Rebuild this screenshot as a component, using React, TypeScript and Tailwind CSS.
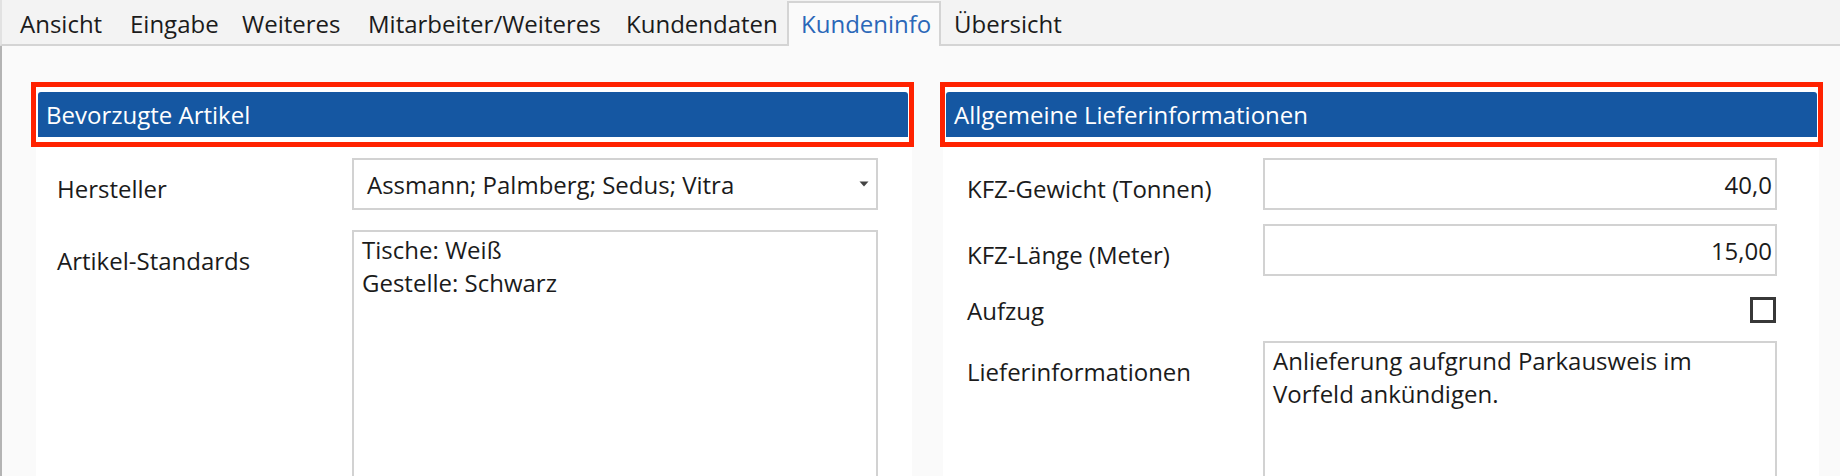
import React from 'react';

const tabs = [
  { label: 'Ansicht', cls: 'w-[110px]' },
  { label: 'Eingabe', cls: 'w-[112px]' },
  { label: 'Weiteres', cls: 'w-[126px]' },
  { label: 'Mitarbeiter/Weiteres', cls: 'w-[258px]' },
  { label: 'Kundendaten', cls: 'w-[175px]' },
];

const SectionHeader: React.FC<{ title: string; className: string }> = ({ title, className }) => (
  <div className={`border-[5px] border-[#ff2200] bg-white py-[5px] ${className}`}>
    <div className="flex h-[45px] items-center rounded-t-[3px] bg-[#1557a2] pl-[8px] leading-[33px] text-white">
      {title}
    </div>
  </div>
);

const App: React.FC = () => {
  return (
    <div className="flex h-[476px] w-[1840px] flex-col overflow-hidden bg-[#fafafa] font-['Open_Sans','Noto_Sans',sans-serif] text-[24px] text-[#1b1b1b]">
      {/* Reiter */}
      <div className="flex h-[46px] shrink-0 items-start border-b-2 border-l-2 border-b-[#d4d4d4] border-l-[#e2e2e2] bg-[#f3f3f3] pl-[4px]">
        {tabs.map((t) => (
          <div key={t.label} className={`h-[44px] pl-[14px] pt-[7px] leading-[33px] whitespace-nowrap ${t.cls}`}>
            {t.label}
          </div>
        ))}
        <div className="mt-[1px] h-[45px] w-[154px] border-2 border-b-0 border-[#d4d4d4] bg-[#fafafa] pl-[12px] pt-[4px] leading-[33px] text-[#2a67b8]">
          Kundeninfo
        </div>
        <div className="h-[44px] pl-[13px] pt-[7px] leading-[33px]">Übersicht</div>
      </div>

      {/* Inhalt */}
      <div className="flex min-h-0 flex-1 gap-[31px] border-l-2 border-[#b4b4b4] pl-[34px] pt-[36px]">
        {/* Bevorzugte Artikel */}
        <div className="w-[876px] bg-white">
          <SectionHeader title="Bevorzugte Artikel" className="ml-[-5px] mr-[-2px] pl-[2px] pr-[1px]" />

          <div className="mt-[11px] flex pl-[21px]">
            <div className="w-[295px] pt-[14px] leading-[33px]">Hersteller</div>
            <div className="flex h-[52px] w-[526px] items-center justify-between border-2 border-[#d2d2d2] pl-[13px] pr-[7px] leading-[33px]">
              <span>Assmann; Palmberg; Sedus; Vitra</span>
              <svg width="10" height="6" viewBox="0 0 10 6">
                <path d="M0.5 0.5 H9.5 L5 5.5 Z" fill="#444" />
              </svg>
            </div>
          </div>

          <div className="mt-[20px] flex pl-[21px]">
            <div className="w-[295px] pt-[14px] leading-[33px]">Artikel-Standards</div>
            <div className="h-[300px] w-[526px] border-2 border-[#d2d2d2] pl-[8px] pt-[1px] leading-[33px]">
              <div>Tische: Weiß</div>
              <div>Gestelle: Schwarz</div>
            </div>
          </div>
        </div>

        {/* Allgemeine Lieferinformationen */}
        <div className="w-[876px] bg-white">
          <SectionHeader title="Allgemeine Lieferinformationen" className="ml-[-3px] mr-[-4px] px-[1px]" />

          <div className="mt-[11px] flex pl-[24px]">
            <div className="w-[296px] pt-[14px] leading-[33px]">KFZ-Gewicht (Tonnen)</div>
            <div className="flex h-[52px] w-[514px] items-center justify-end border-2 border-[#d2d2d2] pr-[3px] leading-[33px]">
              40,0
            </div>
          </div>

          <div className="mt-[14px] flex pl-[24px]">
            <div className="w-[296px] pt-[14px] leading-[33px]">KFZ-Länge (Meter)</div>
            <div className="flex h-[52px] w-[514px] items-center justify-end border-2 border-[#d2d2d2] pr-[3px] leading-[33px]">
              15,00
            </div>
          </div>

          <div className="mt-[14px] flex h-[40px] items-center pl-[24px]">
            <div className="w-[296px] leading-[33px]">Aufzug</div>
            <div className="flex w-[514px] justify-end pr-[1px]">
              <div className="h-[26px] w-[26px] border-[3px] border-[#383838] bg-white" />
            </div>
          </div>

          <div className="mt-[11px] flex pl-[24px]">
            <div className="w-[296px] pt-[14px] leading-[33px]">Lieferinformationen</div>
            <div className="h-[300px] w-[514px] border-2 border-[#d2d2d2] pl-[8px] pt-[1px] leading-[33px]">
              <div>Anlieferung aufgrund Parkausweis im</div>
              <div>Vorfeld ankündigen.</div>
            </div>
          </div>
        </div>
      </div>
    </div>
  );
};

export default App;
